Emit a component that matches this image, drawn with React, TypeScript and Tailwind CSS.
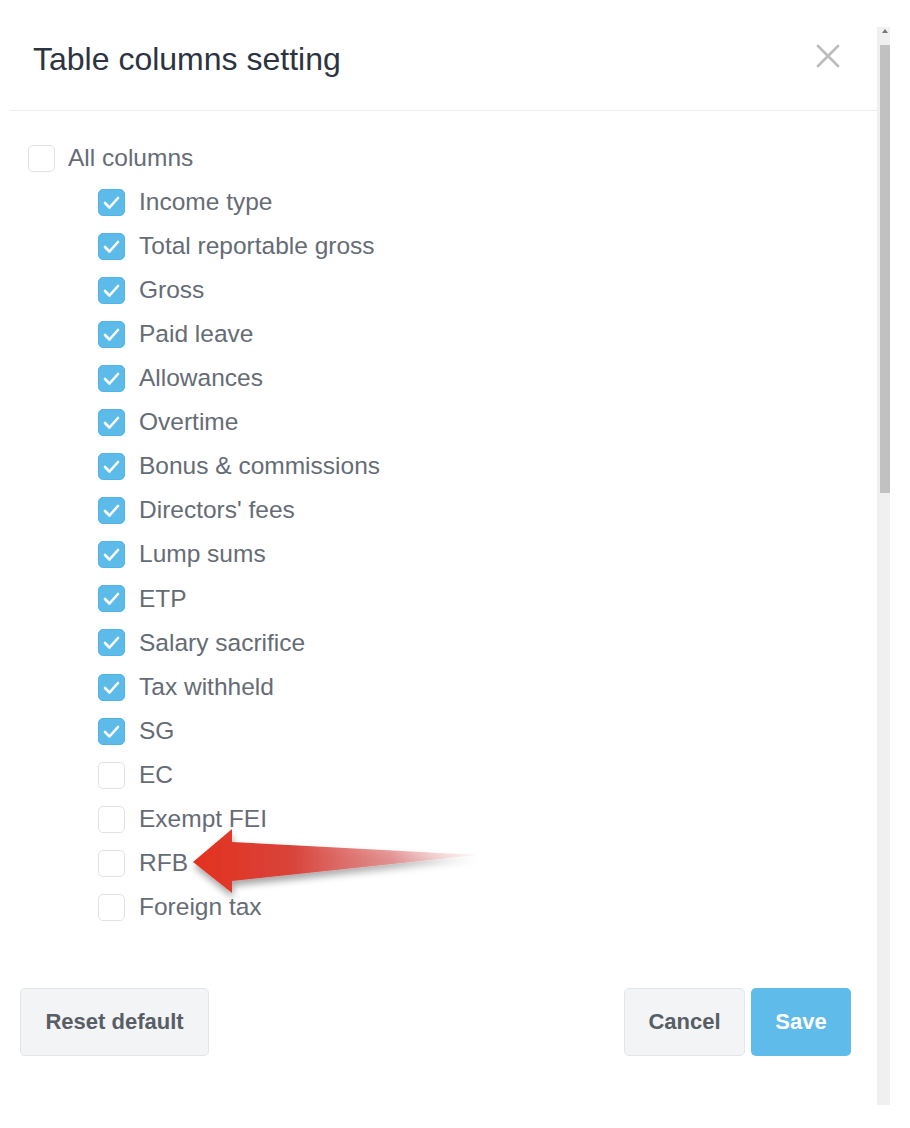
import { useState } from "react";

const COLUMNS = [
  "Income type",
  "Total reportable gross",
  "Gross",
  "Paid leave",
  "Allowances",
  "Overtime",
  "Bonus & commissions",
  "Directors' fees",
  "Lump sums",
  "ETP",
  "Salary sacrifice",
  "Tax withheld",
  "SG",
  "EC",
  "Exempt FEI",
  "RFB",
  "Foreign tax",
];

const DEFAULT_ON = 13;

const Box = ({ checked, onClick }: { checked: boolean; onClick: () => void }) => (
  <button
    onClick={onClick}
    className={
      checked
        ? "w-[27px] h-[27px] rounded-[5px] border border-[#52b3e4] bg-[#5dbbe9] flex items-center justify-center shrink-0"
        : "w-[27px] h-[27px] rounded-[5px] border border-[#dfe3e6] bg-white shrink-0"
    }
  >
    {checked && (
      <svg width="19" height="19" viewBox="0 0 19 19" fill="none">
        <path d="M3 10 L7.5 14.5 L16 5" stroke="white" strokeWidth="2.6" strokeLinecap="round" strokeLinejoin="round" />
      </svg>
    )}
  </button>
);

export default function App() {
  const [on, setOn] = useState<boolean[]>(COLUMNS.map((_, i) => i < DEFAULT_ON));
  const all = on.every(Boolean);

  const toggle = (i: number) => setOn(on.map((v, j) => (j === i ? !v : v)));

  return (
    <div className="w-[910px] h-[1128px] bg-white relative flex font-['Liberation_Sans',Arial,sans-serif]">
      <div className="w-[877px] flex flex-col">
        <div className="ml-[10px] h-[111px] border-b border-[#e9eef2] flex items-center justify-between pl-[23px] pr-[37px] pt-[8px]">
          <span className="text-[32px] text-[#2b3440]">Table columns setting</span>
          <svg width="24" height="24" viewBox="0 0 24 24" className="-mt-[6px]">
            <path d="M2 2 L22 22 M22 2 L2 22" stroke="#bcbcbc" strokeWidth="2.6" strokeLinecap="round" />
          </svg>
        </div>

        <div className="pt-[25px] flex flex-col">
          <div className="h-[44px] flex items-center pl-[28px]">
            <Box checked={all} onClick={() => setOn(COLUMNS.map(() => !all))} />
            <span className="ml-[13px] text-[24.5px] text-[#656c75]">All columns</span>
          </div>
          {COLUMNS.map((c, i) => (
            <div key={c} className="h-[44.1px] flex items-center pl-[98px]">
              <Box checked={on[i]} onClick={() => toggle(i)} />
              <span className="ml-[14px] text-[24.5px] text-[#656c75]">{c}</span>
            </div>
          ))}
        </div>

        <div className="mt-[58px] flex justify-between pl-[20px] pr-[26px]">
          <button className="w-[189px] h-[68px] rounded-[5px] border border-[#e2e6ea] bg-[#f3f4f6] text-[22px] font-bold text-[#585e66]">
            Reset default
          </button>
          <div className="flex gap-[6px]">
            <button className="w-[121px] h-[68px] rounded-[5px] border border-[#e2e6ea] bg-[#f3f4f6] text-[22px] font-bold text-[#585e66]">
              Cancel
            </button>
            <button className="w-[100px] h-[68px] rounded-[5px] bg-[#5fbbea] text-[22px] font-bold text-white">
              Save
            </button>
          </div>
        </div>
      </div>

      <div className="w-[13px] mt-[27px] h-[1078px] bg-[#f0f0f0] flex flex-col">
        <div className="h-[18px] flex items-start justify-end pt-[2px] pr-[2px]">
          <svg width="6" height="4" viewBox="0 0 6 4">
            <path d="M0 4 L3 0 L6 4 Z" fill="#777" />
          </svg>
        </div>
        <div className="ml-[3px] w-[10px] h-[448px] bg-[#c1c1c1]" />
      </div>

      {/* red callout arrow pointing at RFB */}
      <svg className="absolute left-[185px] top-[820px]" width="310" height="95" viewBox="0 0 310 95">
        <defs>
          <linearGradient id="arrowFill" x1="8" y1="0" x2="293" y2="0" gradientUnits="userSpaceOnUse">
            <stop offset="0" stopColor="#e3311f" />
            <stop offset="0.35" stopColor="#d9443b" />
            <stop offset="0.7" stopColor="#e07d7d" stopOpacity="0.75" />
            <stop offset="1" stopColor="#f2c4c4" stopOpacity="0.15" />
          </linearGradient>
          <filter id="arrowShadow" x="-10%" y="-30%" width="120%" height="170%">
            <feDropShadow dx="1" dy="5" stdDeviation="3.5" floodColor="#000" floodOpacity="0.35" />
          </filter>
        </defs>
        <path
          d="M8 42 L47 9 L47 22 L293 35 L47 61 L47 73 Z"
          fill="url(#arrowFill)"
          filter="url(#arrowShadow)"
        />
      </svg>
    </div>
  );
}
